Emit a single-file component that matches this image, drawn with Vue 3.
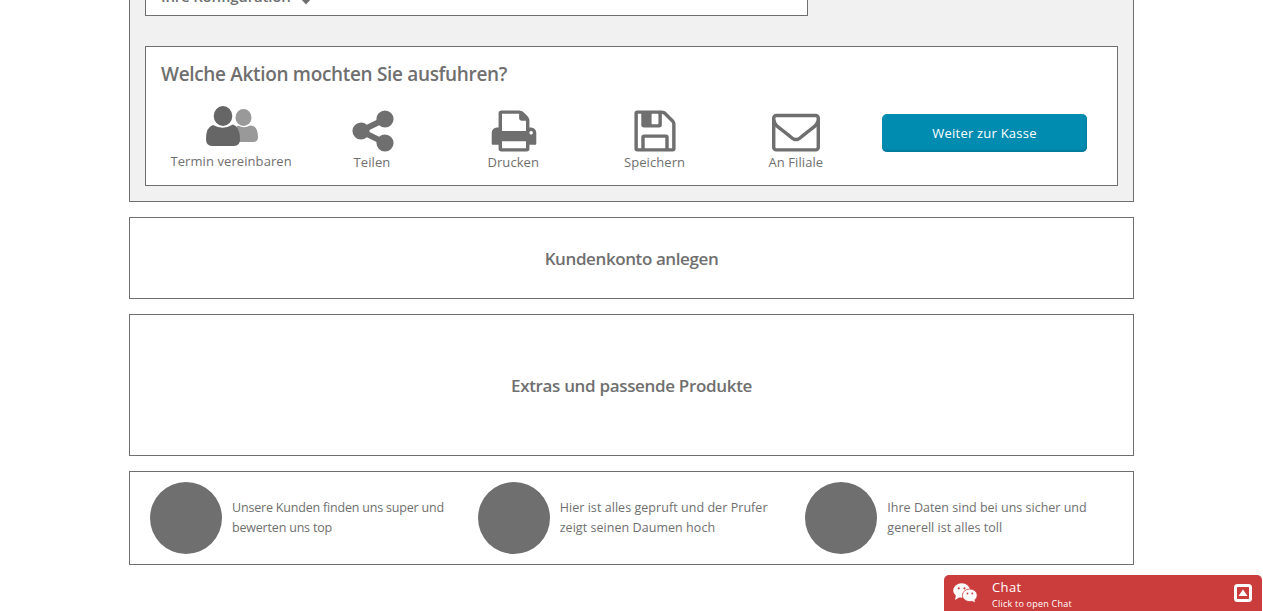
<script setup>
const actions = [
  { label: 'Teilen', cls: 'teilen', d: 'M1344 1024q133 0 226.5 93.5t93.5 226.5-93.5 226.5-226.5 93.5-226.5-93.5-93.5-226.5q0-12 2-34l-360-180q-92 86-218 86-133 0-226.5-93.5t-93.5-226.5 93.5-226.5 226.5-93.5q126 0 218 86l360-180q-2-22-2-34 0-133 93.5-226.5t226.5-93.5 226.5 93.5 93.5 226.5-93.5 226.5-226.5 93.5q-126 0-218-86l-360 180q2 22 2 34t-2 34l360 180q92-86 218-86z' },
  { label: 'Drucken', cls: 'drucken', d: 'M448 1536h896v-256h-896v256zm0-640h896v-384h-160q-40 0-68-28t-28-68v-160h-640v640zm1152 64q0-26-19-45t-45-19-45 19-19 45 19 45 45 19 45-19 19-45zm128 0v416q0 13-9.5 22.5t-22.5 9.5h-224v160q0 40-28 68t-68 28h-960q-40 0-68-28t-28-68v-160h-224q-13 0-22.5-9.5t-9.5-22.5v-416q0-79 56.5-135.5t135.5-56.5h64v-544q0-40 28-68t68-28h672q40 0 88 20t76 48l152 152q28 28 48 76t20 88v256h64q79 0 135.5 56.5t56.5 135.5z' },
  { label: 'Speichern', cls: 'speichern', d: 'M512 1536h768v-384h-768v384zm896 0h128v-896q0-14-10-38.5t-20-34.5l-281-281q-10-10-34-20t-39-10v416q0 40-28 68t-68 28h-576q-40 0-68-28t-28-68v-416h-128v1280h128v-416q0-40 28-68t68-28h832q40 0 68 28t28 68v416zm-384-928v-320q0-13-9.5-22.5t-22.5-9.5h-192q-13 0-22.5 9.5t-9.5 22.5v320q0 13 9.5 22.5t22.5 9.5h192q13 0 22.5-9.5t9.5-22.5zm640 32v928q0 40-28 68t-68 28h-1344q-40 0-68-28t-28-68v-1344q0-40 28-68t68-28h928q40 0 88 20t76 48l280 280q28 28 48 76t20 88z' },
  { label: 'An Filiale', cls: 'filiale', d: 'M1664 1504v-768q-32 36-69 66-268 206-426 338-51 43-83 67t-86.5 48.5-102.5 24.5h-2q-48 0-102.5-24.5t-86.5-48.5-83-67q-158-132-426-338-37-30-69-66v768q0 13 9.5 22.5t22.5 9.5h1472q13 0 22.5-9.5t9.5-22.5zm0-1051v-24.5l-.5-13-3-12.5-5.5-9-9-7.5-14-2.5h-1472q-13 0-22.5 9.5t-9.5 22.5q0 168 147 284 193 152 401 317 6 5 35 29.5t46 37.5 44.5 31.5 50.5 27.5 43 9h2q20 0 43-9t50.5-27.5 44.5-31.5 46-37.5 35-29.5q208-165 401-317 54-43 100.5-115.5t46.5-131.5zm128-37v1088q0 66-47 113t-113 47h-1472q-66 0-113-47t-47-113v-1088q0-66 47-113t113-47h1472q66 0 113 47t47 113z' },
]
const benefits = [
  ['Unsere Kunden finden uns super und', 'bewerten uns top'],
  ['Hier ist alles gepruft und der Prufer', 'zeigt seinen Daumen hoch'],
  ['Ihre Daten sind bei uns sicher und', 'generell ist alles toll'],
]
</script>

<template>
  <div class="page">
    <main class="content">
      <section class="config">
        <div class="summary">
          <span class="summary-title">Ihre Konfiguration</span>
          <svg class="summary-arrow" width="12" height="8" viewBox="0 0 12 8"><path d="M0 1h12L6 7.500z" /></svg>
        </div>
        <div class="panel">
          <h2><span>Welche Aktion mochten Sie ausfuhren?</span></h2>
          <div class="actions">
            <div class="action people">
              <svg width="54" height="44" viewBox="0 0 54 44">
                <g fill="#999">
                  <ellipse cx="38.500" cy="12.500" rx="8" ry="8.500" />
                  <path d="M31 37V24q0-3 2-3.500q6 3.500 12 0q8 0 8 11.500q0 5-5 5z" />
                </g>
                <path d="M8 20q-7 2-7 14q0 7 6 7h22q6 0 6-6.500q0-13-7-15q-10 6-20 .5z" fill="#666" />
                <ellipse cx="18" cy="11" rx="10.200" ry="11" fill="#fff" />
                <ellipse cx="18" cy="11" rx="9.300" ry="10" fill="#666" />
              </svg>
              <span>Termin vereinbaren</span>
            </div>
            <div v-for="a in actions" :key="a.label" class="action" :class="a.cls">
              <svg width="48" height="48" viewBox="0 0 1792 1792"><path :d="a.d" /></svg>
              <span>{{ a.label }}</span>
            </div>
            <button class="checkout">Weiter zur Kasse</button>
          </div>
        </div>
      </section>
      <section class="box account"><span>Kundenkonto anlegen</span></section>
      <section class="box extras"><span>Extras und passende Produkte</span></section>
      <section class="box benefits">
        <div v-for="(b, i) in benefits" :key="i" class="benefit">
          <i class="dot"></i>
          <p :class="'b' + i"><span>{{ b[0] }}</span><br><span>{{ b[1] }}</span></p>
        </div>
      </section>
    </main>
    <aside class="chat">
      <svg class="bubbles" width="25" height="20" viewBox="0 0 25 20">
        <g fill="#fff">
          <ellipse cx="8.700" cy="7.500" rx="8.500" ry="7.200" />
          <path d="M3 12l-1 5 5-3z" />
        </g>
        <ellipse cx="16.800" cy="12.300" rx="7.400" ry="6.300" fill="#fff" stroke="#cb3d3c" stroke-width=".8" />
        <path d="M18 17l4 2.500-1-4z" fill="#fff" />
        <g fill="#cb3d3c">
          <circle cx="5.800" cy="5.300" r="1.100" /><circle cx="11.500" cy="5.300" r="1.100" />
          <circle cx="14.500" cy="10.500" r=".9" /><circle cx="19.200" cy="10.500" r=".9" />
        </g>
      </svg>
      <div class="chat-text"><strong>Chat</strong><small>Click to open Chat</small></div>
      <svg class="toggle" width="18" height="18" viewBox="0 0 18 18">
        <rect x="1.500" y="1.500" width="15" height="15" rx="2" fill="none" stroke="#fff" stroke-width="3" />
        <path d="M4.500 12h9L9 5.500z" fill="#fff" />
      </svg>
    </aside>
  </div>
</template>

<style>
html, body { overflow: hidden; background: #fff; }
</style>
<style scoped>
* { box-sizing: border-box; }
.page { position: relative; height: 611px; overflow: hidden; font-family: "Trebuchet MS", "Open Sans", sans-serif; color: #6f6f6f; white-space: nowrap; }
.content { width: 1005px; margin: 0 auto; }
.config { height: 202px; padding: 0 15px; border: 1px solid #6f6f6f; border-top: 0; background: #f1f1f1; }
.summary { display: flex; width: 663px; height: 16px; padding-left: 15px; border: 1px solid #6f6f6f; border-top: 0; background: #fff; }
.summary-title { margin-top: -15px; font-size: 15px; line-height: 22px; font-weight: 600; letter-spacing: -.18px; }
.summary-arrow { margin: -3px 0 0 9px; fill: #6f6f6f; }
.panel { height: 140px; margin-top: 30px; padding: 0 15px; border: 1px solid #6f6f6f; background: #fff; }
h2 { margin: 13px 0 0; font-size: 19px; line-height: 28px; font-weight: 600; letter-spacing: -.33px; }
.actions { display: grid; grid-template-columns: repeat(5, 141.3px) 205px; margin-left: -1px; margin-top: 17px; }
.action { display: flex; flex-direction: column; align-items: center; font-size: 13px; line-height: 16px; letter-spacing: .08px; }
.action svg { display: block; margin-top: 1.600px; margin-left: 2px; fill: #6f6f6f; flex: none; }
.action span { margin-top: -.6px; }
.speichern svg, .filiale svg { margin-left: 0; }
.people svg { margin-top: 0; height: 44px; margin-left: 3px; }
.people span { margin-top: 4px; margin-left: 1px; }
.checkout { height: 38px; width: 205px; margin: 9px 0 0 15.500px; padding: 0; border: 0; border-radius: 5px; background: #008cb0; box-shadow: inset -1px -2px 2px #007a9b; color: #fff; font: 13px/38px "Trebuchet MS", "Open Sans", sans-serif; letter-spacing: .22px; }
.box { display: flex; align-items: center; justify-content: center; margin-top: 15px; border: 1px solid #6f6f6f; background: #fff; font-size: 17px; font-weight: 600; letter-spacing: -.4px; }
.account { height: 82px; }
.extras { height: 142px; letter-spacing: -.33px; }
.benefits { height: 94px; justify-content: flex-start; padding-left: 20px; }
.benefit { display: flex; align-items: center; width: 327.700px; }
.dot { width: 72px; height: 72px; border-radius: 50%; background: #6f6f6f; }
.benefit p { margin: 0 0 0 10px; font-size: 12.500px; line-height: 20px; font-weight: 400; letter-spacing: 0; }
.benefit .b0 { letter-spacing: -.19px; }
.benefit .b1 { letter-spacing: .05px; }
.chat { position: absolute; right: 1px; bottom: 0; display: flex; width: 318px; height: 36px; padding: 0 10px 0 9px; border-radius: 5px 5px 0 0; background: #cb3d3c; color: #fff; }
.bubbles { margin-top: 8px; }
.chat-text { display: flex; flex-direction: column; margin-left: 14px; flex: 1; }
.chat strong { margin-top: 4px; font-size: 13px; line-height: 17px; font-weight: 400; letter-spacing: .4px; }
.chat small { font-size: 9px; line-height: 15px; letter-spacing: .23px; }
.toggle { margin-top: 9px; }
</style>
